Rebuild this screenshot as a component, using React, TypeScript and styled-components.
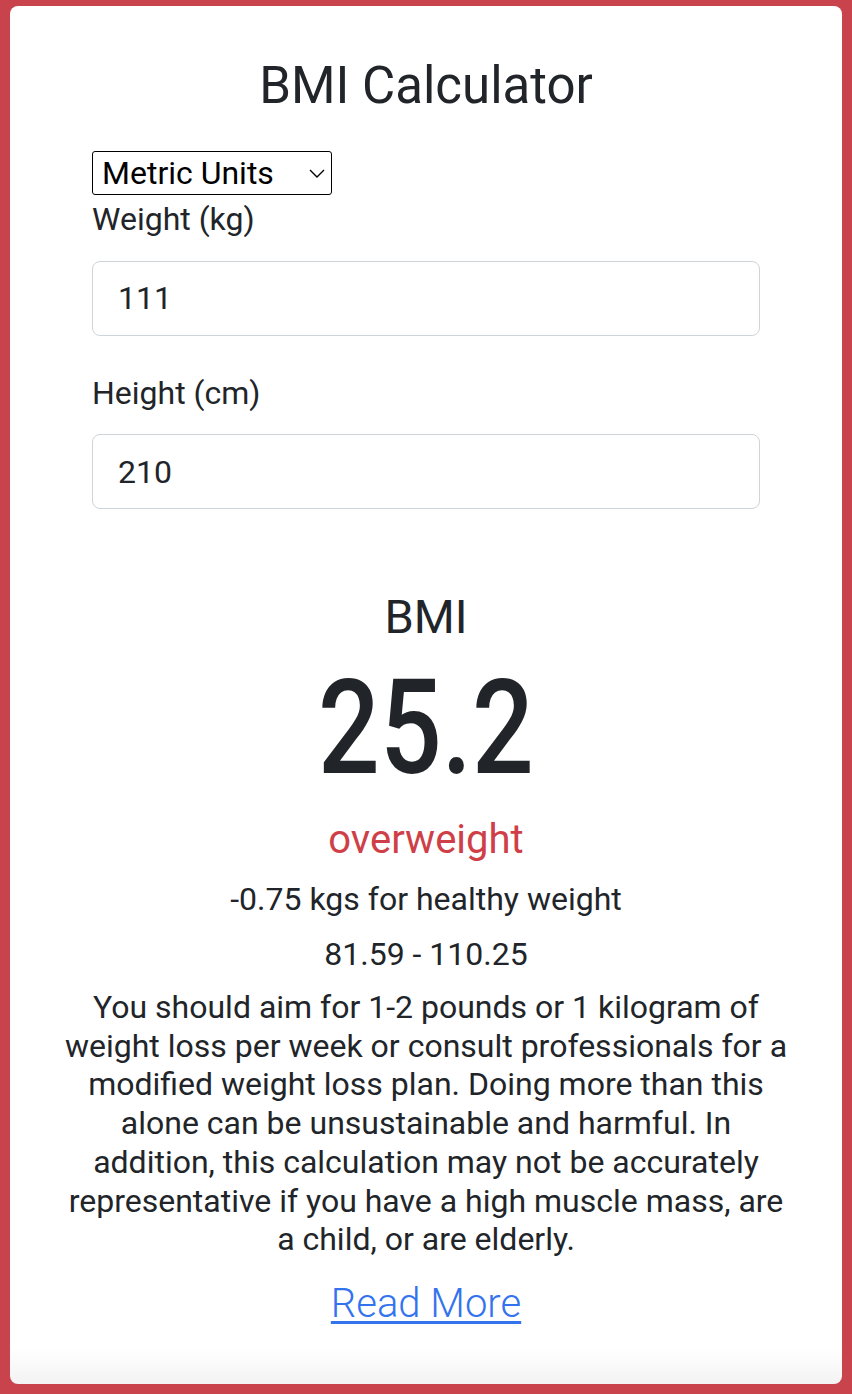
import React, { useState } from "react";
import styled, { createGlobalStyle } from "styled-components";

const GlobalStyle = createGlobalStyle`
  html, body { margin: 0; padding: 0; }
  body {
    background: #c8434b;
    font-family: Roboto, "Liberation Sans", sans-serif;
    color: #212529;
  }
  * { box-sizing: border-box; }
`;

const Page = styled.div`
  padding: 6px 10px 10px;
  min-height: 1394px;
`;

const Card = styled.main`
  background: linear-gradient(to bottom, #ffffff calc(100% - 36px), #f3f3f3);
  border-radius: 8px;
  min-height: 1378px;
  padding: 49px 40px 40px;
  display: flex;
  flex-direction: column;
  align-items: center;
`;

const Title = styled.h1`
  margin: 0 0 35px;
  font-size: 51px;
  font-weight: 400;
  line-height: 61px;
  text-align: center;
`;

const Form = styled.form`
  width: 668px;
  display: flex;
  flex-direction: column;
`;

const SelectWrap = styled.div`
  position: relative;
  width: 240px;
  height: 44px;
`;

const UnitSelect = styled.select`
  appearance: none;
  -webkit-appearance: none;
  width: 240px;
  height: 44px;
  font-family: Roboto, "Liberation Sans", sans-serif;
  font-size: 32px;
  line-height: 38px;
  color: #000;
  background: #fff;
  border: 1px solid #000;
  border-radius: 3px;
  padding: 0 30px 0 9px;
  outline: none;
`;

const Chevron = styled.svg`
  position: absolute;
  right: 7px;
  top: 18px;
  width: 16px;
  height: 9px;
  pointer-events: none;
`;

const Field = styled.div`
  margin-top: 5px;
  & + & {
    margin-top: 38px;
  }
`;

const Label = styled.label`
  display: block;
  font-size: 32px;
  line-height: 38.5px;
  margin-bottom: 22px;
`;

const Input = styled.input`
  display: block;
  width: 100%;
  height: 75px;
  border: 1.5px solid #cfd4d9;
  border-radius: 8px;
  padding: 0 25px;
  font-family: Roboto, "Liberation Sans", sans-serif;
  font-size: 32px;
  color: #212529;
  background: #fff;
  outline: none;
`;

const Result = styled.section`
  margin-top: 80px;
  display: flex;
  flex-direction: column;
  align-items: center;
  text-align: center;
`;

const BmiHeading = styled.h2`
  margin: 0;
  font-size: 47px;
  font-weight: 400;
  line-height: 56.4px;
`;

const BmiValue = styled.div`
  margin-top: 4.5px;
  font-size: 131px;
  font-weight: 500;
  line-height: 157px;
  transform: scaleX(0.83);
`;

const Category = styled.div`
  margin-top: 9px;
  color: #cf3f47;
  font-size: 40px;
  line-height: 48px;
`;

const Line = styled.p<{ $gap: number }>`
  margin: ${(p) => p.$gap}px 0 0;
  font-size: 32px;
  line-height: 38.5px;
`;

const Advice = styled.p`
  margin: 13.8px 0 0;
  font-size: 32px;
  line-height: 38.8px;
  max-width: 726px;
`;

const ReadMore = styled.a`
  margin-top: 20.4px;
  font-size: 40px;
  font-weight: 300;
  line-height: 48px;
  color: #3373ee;
  text-decoration: underline;
  text-decoration-thickness: 3px;
  text-underline-offset: 4px;
`;

export default function App() {
  const [units, setUnits] = useState("metric");
  const [weight, setWeight] = useState("111");
  const [height, setHeight] = useState("210");
  return (
    <>
      <GlobalStyle />
      <Page>
        <Card>
          <Title>BMI Calculator</Title>
          <Form onSubmit={(e) => e.preventDefault()}>
            <SelectWrap>
              <UnitSelect value={units} onChange={(e) => setUnits(e.target.value)}>
                <option value="metric">Metric Units</option>
                <option value="imperial">Imperial Units</option>
              </UnitSelect>
              <Chevron viewBox="0 0 16 9" fill="none">
                <path d="M1 1l7 7 7-7" stroke="#000" strokeWidth="1.4" />
              </Chevron>
            </SelectWrap>
            <Field>
              <Label htmlFor="w">Weight (kg)</Label>
              <Input id="w" value={weight} onChange={(e) => setWeight(e.target.value)} />
            </Field>
            <Field>
              <Label htmlFor="h">Height (cm)</Label>
              <Input id="h" value={height} onChange={(e) => setHeight(e.target.value)} />
            </Field>
          </Form>
          <Result>
            <BmiHeading>BMI</BmiHeading>
            <BmiValue>25.2</BmiValue>
            <Category>overweight</Category>
            <Line $gap={16.5}>-0.75 kgs for healthy weight</Line>
            <Line $gap={16.5}>81.59 - 110.25</Line>
            <Advice>
              You should aim for 1-2 pounds or 1 kilogram of weight loss per week or consult
              professionals for a modified weight loss plan. Doing more than this alone can be
              unsustainable and harmful. In addition, this calculation may not be accurately
              representative if you have a high muscle mass, are a child, or are elderly.
            </Advice>
            <ReadMore href="#">Read More</ReadMore>
          </Result>
        </Card>
      </Page>
    </>
  );
}
